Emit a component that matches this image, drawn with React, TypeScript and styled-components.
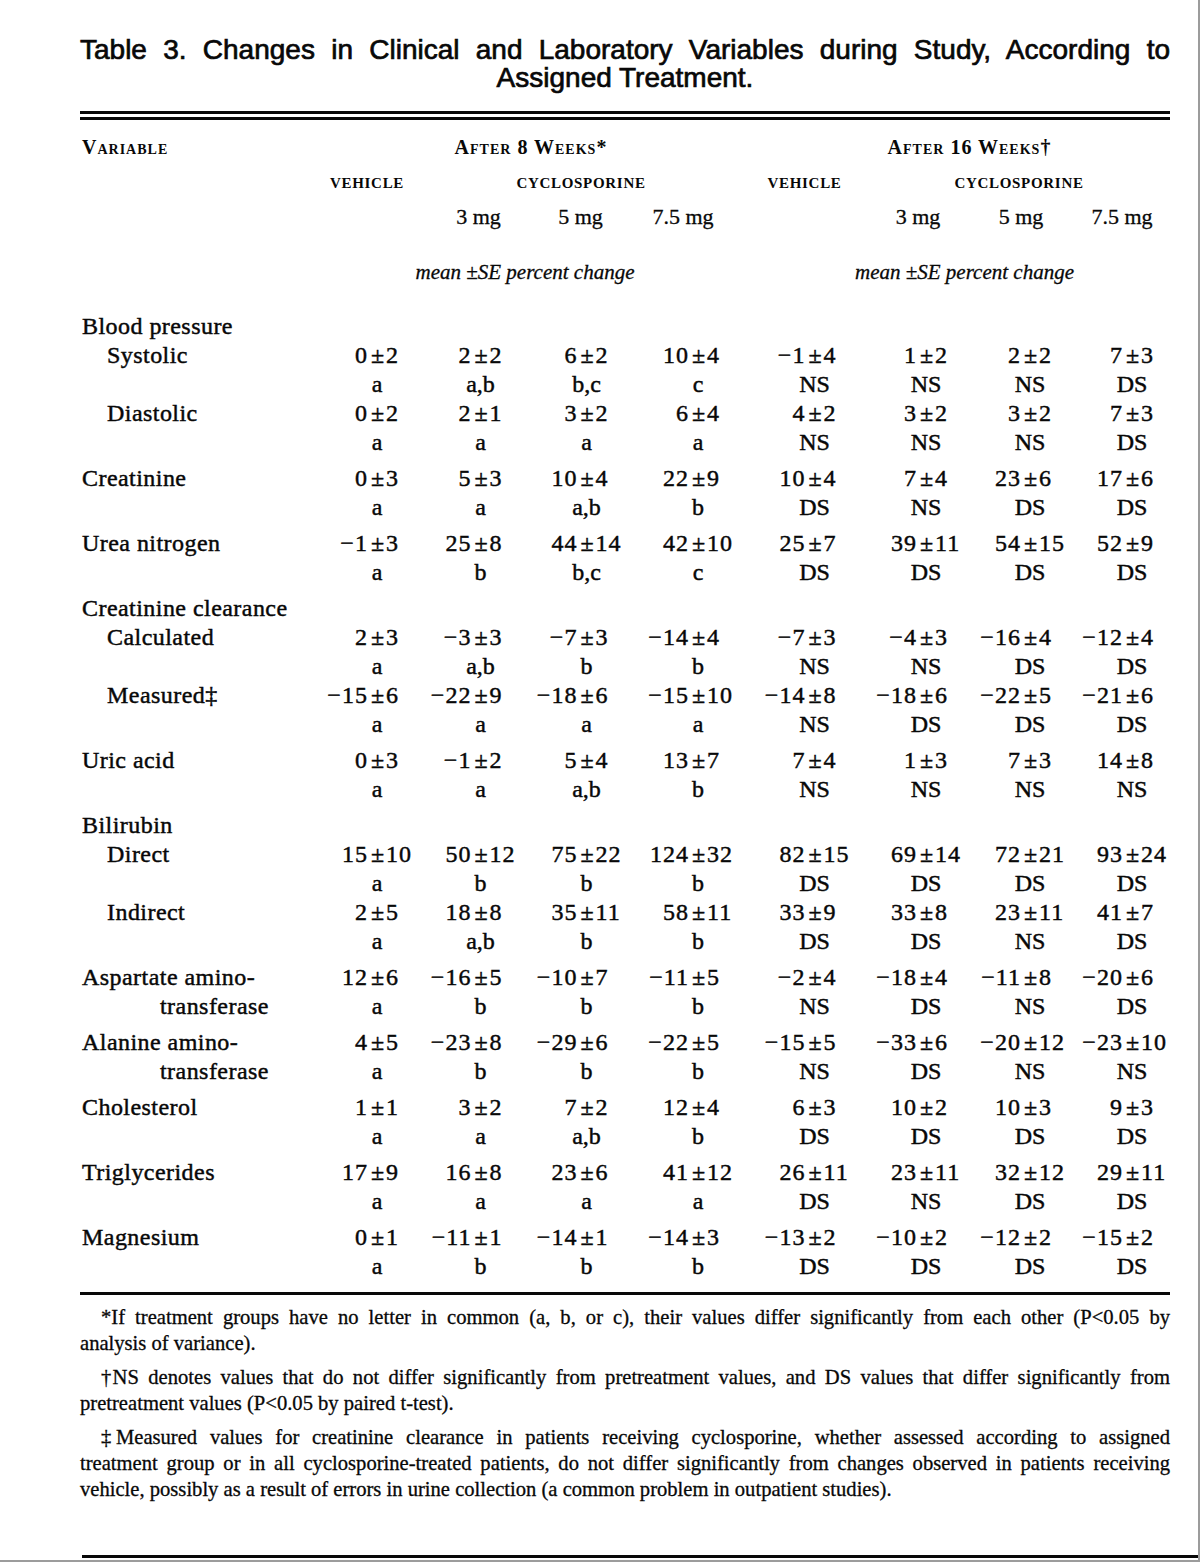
import React from 'react';
import styled, { createGlobalStyle } from 'styled-components';

const GlobalStyle = createGlobalStyle`
  html, body { margin: 0; padding: 0; background: #ffffff; }
  body {
    color: #080808;
    font-family: "Liberation Serif", "Times New Roman", serif;
  }
`;

const COLS = '246px 102px 105px 107px 116px 117px 106px 102px 102px';

const Page = styled.div`
  box-sizing: border-box;
  width: 1200px;
  height: 1562px;
  border-right: 2px solid #9c9c9c;
  border-bottom: 2px solid #9c9c9c;
  padding: 36px 0 0 80px;
  display: flex;
  flex-direction: column;
  overflow: hidden;
  -webkit-text-stroke: 0.3px currentColor;
`;

const Title = styled.h1`
  margin: 0;
  width: 1090px;
  font-family: "Liberation Sans", Arial, sans-serif;
  font-weight: 400;
  font-size: 28px;
  line-height: 28px;
  -webkit-text-stroke: 0.7px currentColor;
`;

const TitleLine = styled.span<{ $justify?: boolean }>`
  display: block;
  text-align: ${(p) => (p.$justify ? 'justify' : 'center')};
  text-align-last: ${(p) => (p.$justify ? 'justify' : 'center')};
`;

const DoubleRule = styled.div`
  margin-top: 19px;
  width: 1090px;
  height: 3px;
  border-top: 3px solid #080808;
  border-bottom: 3px solid #080808;
`;

const SingleRule = styled.div<{ $gap: number }>`
  margin-top: ${(p) => p.$gap}px;
  width: 1090px;
  height: 3px;
  background: #080808;
`;

const FinalRule = styled.div`
  margin-top: auto;
  margin-bottom: 2px;
  margin-left: 2px;
  height: 3px;
  background: #080808;
`;

const HeadRow = styled.div<{ $gap: number; $lh: number }>`
  display: grid;
  grid-template-columns: ${COLS};
  width: 1103px;
  margin-top: ${(p) => p.$gap}px;
  line-height: ${(p) => p.$lh}px;
`;

const GroupHead = styled.div<{ $col: string; $shift?: number }>`
  grid-column: ${(p) => p.$col};
  text-align: center;
  padding-right: ${(p) => p.$shift ?? 0}px;
  font-size: 20px;
  font-weight: 700;
  font-variant: small-caps;
  letter-spacing: 1px;
  -webkit-text-stroke: 0;
`;

const VarHead = styled(GroupHead)`
  text-align: left;
  padding-left: 2px;
`;

const ArmHead = styled.div<{ $col: string; $shift?: number }>`
  grid-column: ${(p) => p.$col};
  text-align: center;
  padding-right: ${(p) => p.$shift ?? 0}px;
  font-size: 15px;
  font-weight: 700;
  letter-spacing: 0.7px;
  text-transform: uppercase;
  -webkit-text-stroke: 0;
`;

const DoseHead = styled.div<{ $col: string; $shift?: number }>`
  grid-column: ${(p) => p.$col};
  text-align: center;
  padding-right: ${(p) => p.$shift ?? 0}px;
  font-size: 22px;
`;

const UnitHead = styled.div<{ $col: string; $shift?: number }>`
  grid-column: ${(p) => p.$col};
  text-align: center;
  padding-right: ${(p) => p.$shift ?? 0}px;
  font-size: 21px;
  font-style: italic;
`;

const Body = styled.div`
  margin-top: 27px;
  display: flex;
  flex-direction: column;
  gap: 7px;
`;

const Group = styled.div`
  display: grid;
  grid-template-columns: ${COLS};
  grid-auto-rows: 29px;
  width: 1103px;
  font-size: 24px;
  line-height: 29px;
  -webkit-text-stroke: 0.45px currentColor;
`;

const Label = styled.div<{ $indent: number }>`
  grid-column: 1;
  padding-left: ${(p) => 2 + p.$indent}px;
  letter-spacing: 0.45px;
  white-space: nowrap;
`;

const Val = styled.div`
  display: grid;
  grid-template-columns: 1fr auto 1fr;
  letter-spacing: 1px;
`;

const ValLeft = styled.span`
  text-align: right;
  white-space: nowrap;
`;

const ValRight = styled.span`
  text-align: left;
  white-space: nowrap;
`;

const PlusMinus = styled.span`
  padding: 0 2px 0 3px;
  letter-spacing: 0;
`;

const Minus = styled.span`
  margin-right: 1px;
  letter-spacing: 0;
`;

const Sig = styled.div`
  text-align: center;
`;

const Notes = styled.div`
  margin-top: 9px;
  width: 1090px;
  display: flex;
  flex-direction: column;
  gap: 8px;
  font-size: 20.6px;
  line-height: 26px;
`;

const Note = styled.p`
  margin: 0;
`;

const NoteLine = styled.span<{ $first?: boolean; $last?: boolean }>`
  display: block;
  white-space: nowrap;
  text-indent: ${(p) => (p.$first ? '21px' : '0')};
  text-align: ${(p) => (p.$last ? 'left' : 'justify')};
  text-align-last: ${(p) => (p.$last ? 'left' : 'justify')};
`;

const NoteMark = styled.span<{ $pull: number }>`
  margin-right: ${(p) => p.$pull}px;
`;

type Entry = { label: string; label2?: string; sub?: boolean; v: string[]; s: string[] };
type GroupData = { title?: string; entries: Entry[] };

const DATA: GroupData[] = [
  {
    title: 'Blood pressure',
    entries: [
      { label: 'Systolic', sub: true, v: ['0±2', '2±2', '6±2', '10±4', '−1±4', '1±2', '2±2', '7±3'], s: ['a', 'a,b', 'b,c', 'c', 'NS', 'NS', 'NS', 'DS'] },
      { label: 'Diastolic', sub: true, v: ['0±2', '2±1', '3±2', '6±4', '4±2', '3±2', '3±2', '7±3'], s: ['a', 'a', 'a', 'a', 'NS', 'NS', 'NS', 'DS'] },
    ],
  },
  { entries: [{ label: 'Creatinine', v: ['0±3', '5±3', '10±4', '22±9', '10±4', '7±4', '23±6', '17±6'], s: ['a', 'a', 'a,b', 'b', 'DS', 'NS', 'DS', 'DS'] }] },
  { entries: [{ label: 'Urea nitrogen', v: ['−1±3', '25±8', '44±14', '42±10', '25±7', '39±11', '54±15', '52±9'], s: ['a', 'b', 'b,c', 'c', 'DS', 'DS', 'DS', 'DS'] }] },
  {
    title: 'Creatinine clearance',
    entries: [
      { label: 'Calculated', sub: true, v: ['2±3', '−3±3', '−7±3', '−14±4', '−7±3', '−4±3', '−16±4', '−12±4'], s: ['a', 'a,b', 'b', 'b', 'NS', 'NS', 'DS', 'DS'] },
      { label: 'Measured‡', sub: true, v: ['−15±6', '−22±9', '−18±6', '−15±10', '−14±8', '−18±6', '−22±5', '−21±6'], s: ['a', 'a', 'a', 'a', 'NS', 'DS', 'DS', 'DS'] },
    ],
  },
  { entries: [{ label: 'Uric acid', v: ['0±3', '−1±2', '5±4', '13±7', '7±4', '1±3', '7±3', '14±8'], s: ['a', 'a', 'a,b', 'b', 'NS', 'NS', 'NS', 'NS'] }] },
  {
    title: 'Bilirubin',
    entries: [
      { label: 'Direct', sub: true, v: ['15±10', '50±12', '75±22', '124±32', '82±15', '69±14', '72±21', '93±24'], s: ['a', 'b', 'b', 'b', 'DS', 'DS', 'DS', 'DS'] },
      { label: 'Indirect', sub: true, v: ['2±5', '18±8', '35±11', '58±11', '33±9', '33±8', '23±11', '41±7'], s: ['a', 'a,b', 'b', 'b', 'DS', 'DS', 'NS', 'DS'] },
    ],
  },
  { entries: [{ label: 'Aspartate amino-', label2: 'transferase', v: ['12±6', '−16±5', '−10±7', '−11±5', '−2±4', '−18±4', '−11±8', '−20±6'], s: ['a', 'b', 'b', 'b', 'NS', 'DS', 'NS', 'DS'] }] },
  { entries: [{ label: 'Alanine amino-', label2: 'transferase', v: ['4±5', '−23±8', '−29±6', '−22±5', '−15±5', '−33±6', '−20±12', '−23±10'], s: ['a', 'b', 'b', 'b', 'NS', 'DS', 'NS', 'NS'] }] },
  { entries: [{ label: 'Cholesterol', v: ['1±1', '3±2', '7±2', '12±4', '6±3', '10±2', '10±3', '9±3'], s: ['a', 'a', 'a,b', 'b', 'DS', 'DS', 'DS', 'DS'] }] },
  { entries: [{ label: 'Triglycerides', v: ['17±9', '16±8', '23±6', '41±12', '26±11', '23±11', '32±12', '29±11'], s: ['a', 'a', 'a', 'a', 'DS', 'NS', 'DS', 'DS'] }] },
  { entries: [{ label: 'Magnesium', v: ['0±1', '−11±1', '−14±1', '−14±3', '−13±2', '−10±2', '−12±2', '−15±2'], s: ['a', 'b', 'b', 'b', 'DS', 'DS', 'DS', 'DS'] }] },
];

type NoteData = { mark: string; pull: number; lines: string[] };

const NOTES: NoteData[] = [
  {
    mark: '*',
    pull: 0,
    lines: [
      'If treatment groups have no letter in common (a, b, or c), their values differ significantly from each other (P<0.05 by',
      'analysis of variance).',
    ],
  },
  {
    mark: '†',
    pull: -3,
    lines: [
      'NS denotes values that do not differ significantly from pretreatment values, and DS values that differ significantly from',
      'pretreatment values (P<0.05 by paired t-test).',
    ],
  },
  {
    mark: '‡',
    pull: -3,
    lines: [
      'Measured values for creatinine clearance in patients receiving cyclosporine, whether assessed according to assigned',
      'treatment group or in all cyclosporine-treated patients, do not differ significantly from changes observed in patients receiving',
      'vehicle, possibly as a result of errors in urine collection (a common problem in outpatient studies).',
    ],
  },
];

function Value({ text }: { text: string }) {
  const [left, right] = text.split('±');
  const neg = left.startsWith('−');
  const digits = neg ? left.slice(1) : left;
  return (
    <Val>
      <ValLeft>
        {neg && <Minus>−</Minus>}
        {digits}
      </ValLeft>
      <PlusMinus>±</PlusMinus>
      <ValRight>{right}</ValRight>
    </Val>
  );
}

export default function App() {
  return (
    <>
      <GlobalStyle />
      <Page>
        <Title>
          <TitleLine $justify>Table 3. Changes in Clinical and Laboratory Variables during Study, According to</TitleLine>
          <TitleLine>Assigned Treatment.</TitleLine>
        </Title>
        <DoubleRule />

        <HeadRow $gap={15} $lh={24}>
          <VarHead $col="1">Variable</VarHead>
          <GroupHead $col="2 / 6" $shift={20}>After 8 Weeks*</GroupHead>
          <GroupHead $col="6 / 10">After 16 Weeks†</GroupHead>
        </HeadRow>
        <HeadRow $gap={14} $lh={20}>
          <ArmHead $col="2 / 3" $shift={20}>vehicle</ArmHead>
          <ArmHead $col="3 / 6" $shift={22}>cyclosporine</ArmHead>
          <ArmHead $col="6 / 7" $shift={20}>vehicle</ArmHead>
          <ArmHead $col="7 / 10" $shift={18}>cyclosporine</ArmHead>
        </HeadRow>
        <HeadRow $gap={11} $lh={26}>
          <DoseHead $col="3 / 4" $shift={4}>3 mg</DoseHead>
          <DoseHead $col="4 / 5" $shift={12}>5 mg</DoseHead>
          <DoseHead $col="5 / 6" $shift={30}>7.5 mg</DoseHead>
          <DoseHead $col="7 / 8" $shift={16}>3 mg</DoseHead>
          <DoseHead $col="8 / 9" $shift={18}>5 mg</DoseHead>
          <DoseHead $col="9 / 10" $shift={20}>7.5 mg</DoseHead>
        </HeadRow>
        <HeadRow $gap={29} $lh={26}>
          <UnitHead $col="2 / 6" $shift={32}>mean ±SE percent change</UnitHead>
          <UnitHead $col="6 / 10" $shift={10}>mean ±SE percent change</UnitHead>
        </HeadRow>

        <Body>
          {DATA.map((g, gi) => (
            <Group key={gi}>
              {g.title && (
                <>
                  <Label $indent={0}>{g.title}</Label>
                  <span style={{ gridColumn: '2 / 10' }} />
                </>
              )}
              {g.entries.map((e) => (
                <React.Fragment key={e.label}>
                  <Label $indent={e.sub ? 25 : 0}>{e.label}</Label>
                  {e.v.map((v, i) => (
                    <Value key={i} text={v} />
                  ))}
                  <Label $indent={e.label2 ? 78 : 0}>{e.label2 ?? ''}</Label>
                  {e.s.map((s, i) => (
                    <Sig key={i}>{s}</Sig>
                  ))}
                </React.Fragment>
              ))}
            </Group>
          ))}
        </Body>

        <SingleRule $gap={11} />

        <Notes>
          {NOTES.map((n, ni) => (
            <Note key={ni}>
              {n.lines.map((line, li) => (
                <NoteLine key={li} $first={li === 0} $last={li === n.lines.length - 1}>
                  {li === 0 && <NoteMark $pull={n.pull}>{n.mark}</NoteMark>}
                  {line}
                </NoteLine>
              ))}
            </Note>
          ))}
        </Notes>

        <FinalRule />
      </Page>
    </>
  );
}
